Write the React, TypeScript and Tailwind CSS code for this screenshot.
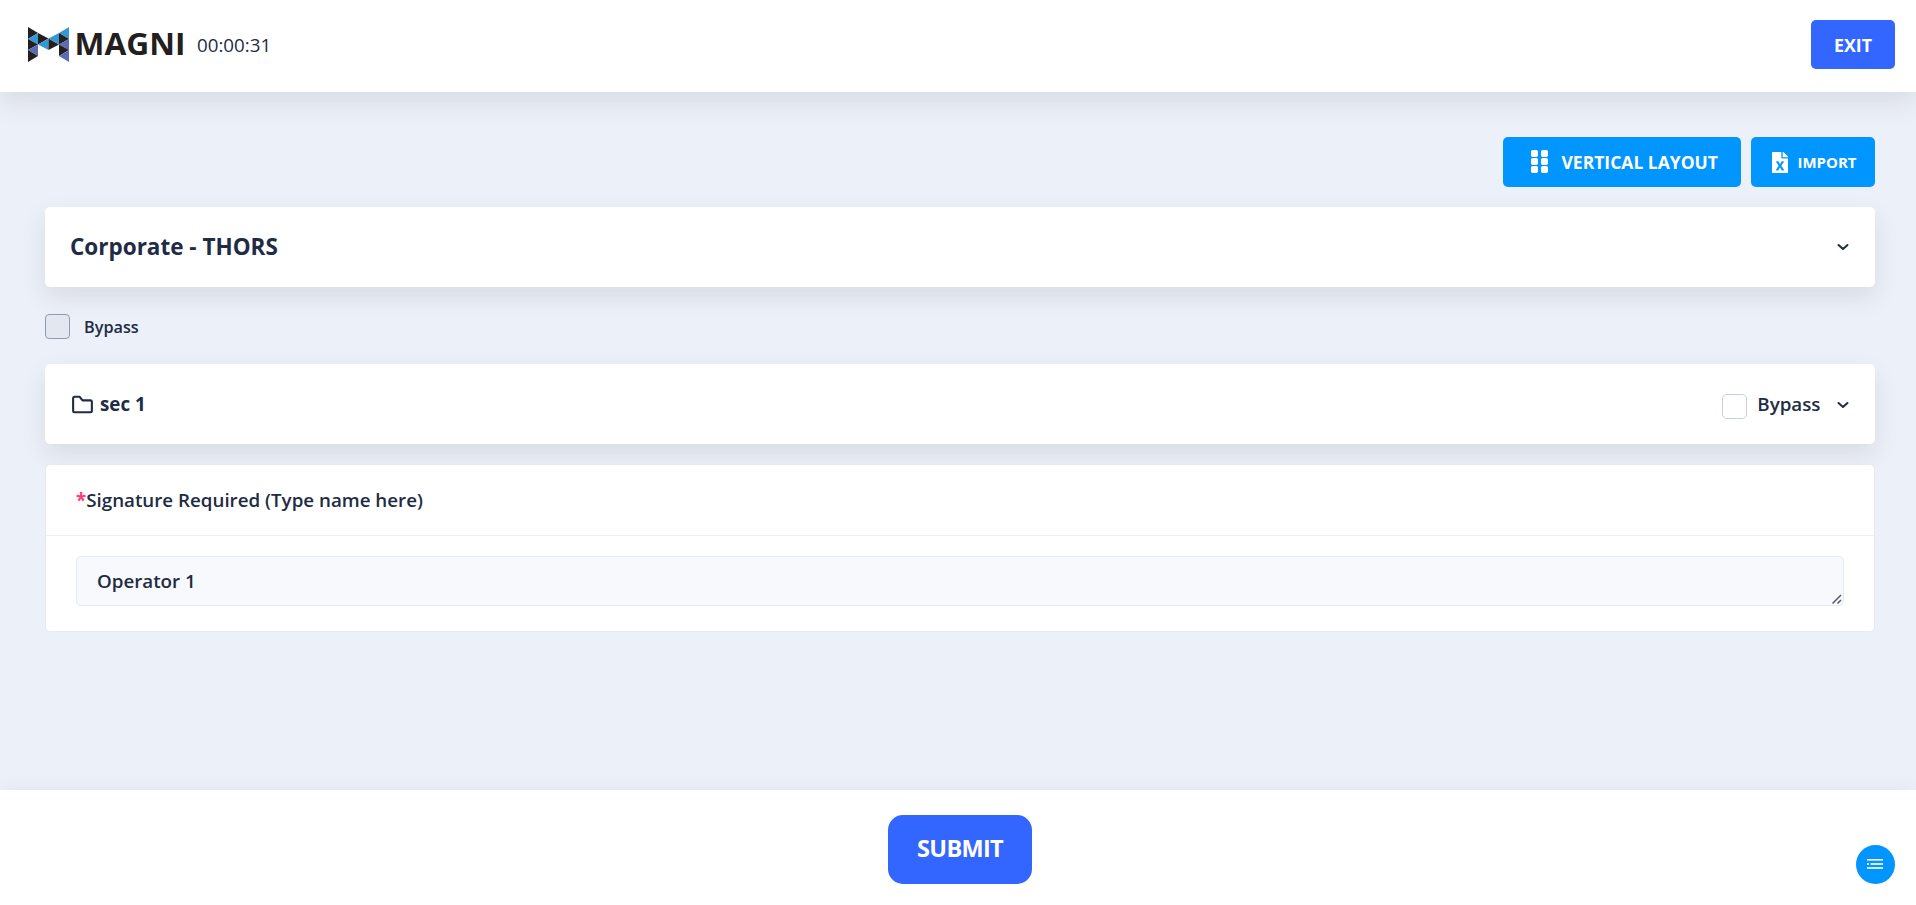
import { useState } from "react"

const markTriangles = [
  { points: "0,0 10,6 0,12", fill: "#231f20" },
  { points: "0,12 10,6 10,17.5", fill: "#3498d3" },
  { points: "0,12 10,17.5 0,23", fill: "#231f20" },
  { points: "0,23 10,17.5 10,29", fill: "#5b6cb3" },
  { points: "0,23 10,29 0,35", fill: "#231f20" },
  { points: "10,6 20.5,11.5 10,17.5", fill: "#231f20" },
  { points: "10,17.5 20.5,11.5 20.5,23", fill: "#3498d3" },
  { points: "20.5,11.5 31,17.5 20.5,23", fill: "#231f20" },
  { points: "20.5,11.5 31,6 31,17.5", fill: "#3498d3" },
  { points: "31,6 41,0 41,12", fill: "#3498d3" },
  { points: "31,6 41,12 31,17.5", fill: "#231f20" },
  { points: "31,17.5 41,12 41,23", fill: "#5b6cb3" },
  { points: "31,17.5 41,23 31,29", fill: "#231f20" },
  { points: "31,29 41,23 41,35", fill: "#5b6cb3" },
]

function Logo() {
  return (
    <svg width="160" height="56" viewBox="0 -10 160 56" className="shrink-0 overflow-visible">
      {markTriangles.map((t) => (
        <polygon key={t.points} points={t.points} fill={t.fill} />
      ))}
      <text
        x="46.5"
        y="28"
        textLength="111"
        lengthAdjust="spacingAndGlyphs"
        fill="#231f20"
        className="font-['Open_Sans'] text-[31px] font-bold"
      >
        MAGNI
      </text>
    </svg>
  )
}

function Chevron() {
  return (
    <svg width="12" height="8" viewBox="0 0 12 8" fill="none" stroke="#222b45" strokeWidth="2" strokeLinecap="round" strokeLinejoin="round">
      <path d="M1.5 2 6 6l4.5-4" />
    </svg>
  )
}

function GridIcon() {
  return (
    <svg width="18" height="24" viewBox="0 0 18 24" fill="#fff">
      {[0, 8, 16].map((y) => (
        <g key={y}>
          <rect x="1" y={y} width="7" height="7" rx="1.7" />
          <rect x="11" y={y} width="7" height="7" rx="1.7" />
        </g>
      ))}
    </svg>
  )
}

function ExcelIcon() {
  return (
    <svg width="16" height="21" viewBox="0 0 384 512" preserveAspectRatio="none" fill="#fff">
      <path d="M224 136V0H24C10.700 0 0 10.700 0 24v464c0 13.300 10.700 24 24 24h336c13.300 0 24-10.700 24-24V160H248c-13.200 0-24-10.800-24-24zm60.100 106.500L224 336l60.100 93.500c5.100 8-.6 18.500-10.100 18.500h-34.900c-4.400 0-8.500-2.400-10.600-6.300C208.900 405.500 192 373 192 373c-6.400 14.800-10 20-36.600 68.800-2.100 3.900-6.100 6.300-10.500 6.300H110c-9.500 0-15.200-10.500-10.100-18.500l60.300-93.500-60.300-93.500c-5.200-8 .6-18.500 10.100-18.500h34.800c4.400 0 8.500 2.400 10.600 6.300 26.100 48.800 20 33.600 36.600 68.500 0 0 6.100-11.700 36.600-68.500 2.100-3.900 6.200-6.300 10.600-6.300H274c9.500-.1 15.200 10.400 10.100 18.400zM384 121.900v6.100H256V0h6.100c6.400 0 12.500 2.500 17 7l97.900 98c4.500 4.500 7 10.600 7 16.900z" />
    </svg>
  )
}

function FolderIcon() {
  return (
    <svg width="25" height="25" viewBox="0 0 24 24" fill="#222b45">
      <path d="M19.500 20.500h-15A2.470 2.470 0 0 1 2 18.070V5.930A2.470 2.470 0 0 1 4.500 3.500h4.600a1 1 0 0 1 .77.370l2.600 3.180h7A2.470 2.470 0 0 1 22 9.480v8.590a2.470 2.470 0 0 1-2.500 2.430zM4 13.760v4.310a.46.46 0 0 0 .5.430h15a.46.46 0 0 0 .5-.43V9.480a.46.46 0 0 0-.5-.43H12a1 1 0 0 1-.77-.37L8.630 5.500H4.500a.46.46 0 0 0-.5.430z" />
    </svg>
  )
}

export default function App() {
  const [name, setName] = useState("Operator 1")

  return (
    <div className="flex h-screen flex-col overflow-hidden bg-[#ecf0f8] font-['Open_Sans',sans-serif] text-[#222b45]">
      <header className="z-10 flex h-[92px] shrink-0 items-center justify-between bg-white pr-[21px] pb-[2px] pl-7 shadow-[0_10px_25px_0_rgba(44,51,73,0.1)]">
        <div className="flex items-center gap-[9px]">
          <Logo />
          <span className="pb-px text-[18.75px] leading-6">00:00:31</span>
        </div>
        <button className="mb-px h-[49px] w-[84px] rounded-[5px] bg-[#3366ff] pt-px text-[17.75px] font-bold text-white">EXIT</button>
      </header>

      <main className="flex-1 pt-[45px] pr-[41px] pl-[45px]">
        <div className="flex justify-end gap-2.5">
          <button className="flex h-[50px] w-[238px] items-center rounded-[5px] bg-[#0095ff] pl-[27px] text-[17.5px] font-bold text-white">
            <GridIcon />
            <span className="ml-[13.5px]">VERTICAL LAYOUT</span>
          </button>
          <button className="flex h-[50px] w-[124px] items-center rounded-[5px] bg-[#0095ff] pl-[21px] text-[15px] font-bold text-white">
            <ExcelIcon />
            <span className="ml-[9.5px]">IMPORT</span>
          </button>
        </div>

        <section className="mt-5 flex h-20 items-center justify-between rounded-[5px] bg-white pr-[26.5px] pl-[25px] shadow-[0_10px_25px_0_rgba(44,51,73,0.1)]">
          <h1 className="pb-px text-[22.5px] font-bold">Corporate - THORS</h1>
          <Chevron />
        </section>

        <label className="mt-[27px] flex h-[25px] w-fit items-center gap-3.5 text-[16.25px] font-semibold">
          <span className="size-[25px] rounded-[4px] border border-[#8f9bb3] bg-[#e3e8f0]" />
          <span className="pt-0.5">Bypass</span>
        </label>

        <section className="mt-[25px] flex h-20 items-center justify-between rounded-[5px] bg-white pr-[26.5px] pl-[25px] shadow-[0_10px_25px_0_rgba(44,51,73,0.1)]">
          <div className="flex items-center gap-[5px] text-[18.75px] font-bold">
            <FolderIcon />
            sec 1
          </div>
          <div className="flex items-center">
            <span className="mt-[4px] size-[25px] rounded-[5px] border border-[#c5d0e2] bg-white" />
            <span className="ml-2.5 text-[18.75px] font-semibold">Bypass</span>
            <span className="mt-[2px] ml-4">
              <Chevron />
            </span>
          </div>
        </section>

        <section className="mt-5 h-[168px] rounded-[5px] border border-[#e4e9f2] bg-white">
          <div className="flex h-[71px] items-center border-b border-[#edf1f7] pl-[30px] text-[18.75px] font-semibold">
            <span className="font-bold text-[#ff3d71]">*</span>Signature Required (Type name here)
          </div>
          <div className="relative px-[30px] pt-5">
            <textarea
              value={name}
              onChange={(e) => setName(e.target.value)}
              className="block h-[50px] w-full resize-none rounded-[5px] border border-[#e4e9f2] bg-[#f7f9fc] px-5 py-3 text-[18.75px] leading-6 font-semibold outline-none"
            />
            <svg width="10" height="10" viewBox="0 0 10 10" stroke="#555a66" strokeWidth="1.5" className="absolute right-8 bottom-0.5">
              <path d="M0.5 9.5 9 1M5.5 9.5 9 6" />
            </svg>
          </div>
        </section>
      </main>

      <footer className="relative z-10 flex h-[115px] shrink-0 justify-center bg-white pt-[25px] pl-1 shadow-[0_0_20px_0_rgba(44,51,73,0.05)]">
        <button className="h-[69px] w-36 rounded-[15px] bg-[#3366ff] pb-px text-[23.5px] font-bold tracking-[-0.7px] text-white">SUBMIT</button>
        <button className="absolute right-[21px] bottom-[21px] flex size-[39px] items-center justify-center rounded-full bg-[#0095ff]">
          <svg width="16" height="12" viewBox="0 0 16 12" fill="#fff" className="mr-px mb-px">
            <rect x="0" y="1" width="16" height="1.6" />
            <rect x="0" y="5.2" width="2" height="1.6" />
            <rect x="3.5" y="5.2" width="12.5" height="1.6" />
            <rect x="0" y="9.2" width="16" height="1.6" />
          </svg>
        </button>
      </footer>
    </div>
  )
}
